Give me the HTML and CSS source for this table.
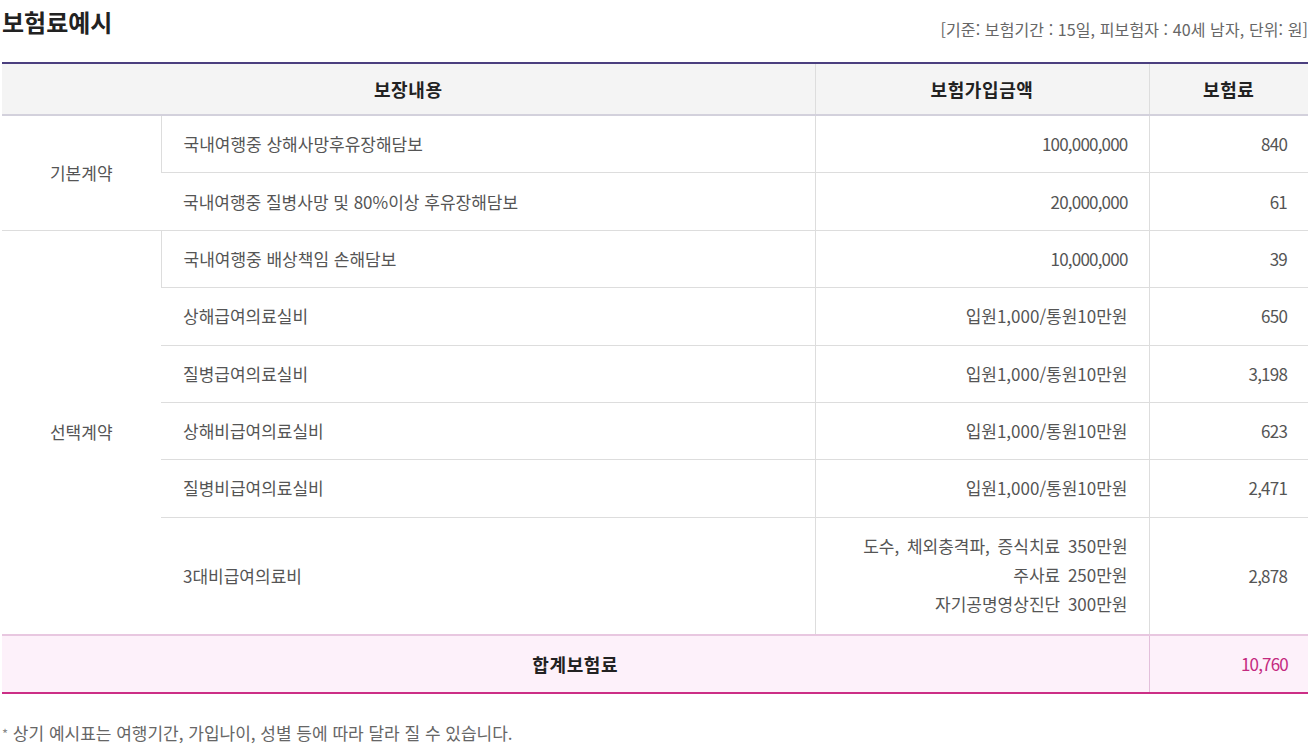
FILE: index.html
```html
<!DOCTYPE html>
<html lang="ko">
<head>
<meta charset="utf-8">
<title>보험료예시</title>
<link rel="stylesheet" href="styles.css">
</head>
<body>
<div class="page">
  <div class="head">
    <h2 class="title">보험료예시</h2>
    <p class="note">[기준: 보험기간 : 15일, 피보험자 : 40세 남자, 단위: 원]</p>
  </div>
  <table class="premium">
    <colgroup>
      <col class="c1"><col class="c2"><col class="c3"><col class="c4">
    </colgroup>
    <thead>
      <tr>
        <th colspan="2">보장내용</th>
        <th>보험가입금액</th>
        <th>보험료</th>
      </tr>
    </thead>
    <tbody>
      <tr>
        <td class="group" rowspan="2">기본계약</td>
        <td class="name">국내여행중 상해사망후유장해담보</td>
        <td class="num digits">100,000,000</td>
        <td class="num digits">840</td>
      </tr>
      <tr>
        <td class="name">국내여행중 질병사망 및 80%이상 후유장해담보</td>
        <td class="num digits">20,000,000</td>
        <td class="num digits">61</td>
      </tr>
      <tr>
        <td class="group" rowspan="6">선택계약</td>
        <td class="name">국내여행중 배상책임 손해담보</td>
        <td class="num digits">10,000,000</td>
        <td class="num digits">39</td>
      </tr>
      <tr>
        <td class="name">상해급여의료실비</td>
        <td class="num">입원1,000/통원10만원</td>
        <td class="num digits">650</td>
      </tr>
      <tr>
        <td class="name">질병급여의료실비</td>
        <td class="num">입원1,000/통원10만원</td>
        <td class="num digits">3,198</td>
      </tr>
      <tr>
        <td class="name">상해비급여의료실비</td>
        <td class="num">입원1,000/통원10만원</td>
        <td class="num digits">623</td>
      </tr>
      <tr>
        <td class="name">질병비급여의료실비</td>
        <td class="num">입원1,000/통원10만원</td>
        <td class="num digits">2,471</td>
      </tr>
      <tr>
        <td class="name">3대비급여의료비</td>
        <td class="num multi">도수, 체외충격파, 증식치료 350만원<br>주사료 250만원<br>자기공명영상진단 300만원</td>
        <td class="num digits">2,878</td>
      </tr>
    </tbody>
    <tfoot>
      <tr>
        <th colspan="3" class="sum-label">합계보험료</th>
        <td class="sum-value">10,760</td>
      </tr>
    </tfoot>
  </table>
  <p class="foot"><span class="star">*</span> 상기 예시표는 여행기간, 가입나이, 성별 등에 따라 달라 질 수 있습니다.</p>
</div>
</body>
</html>
```

FILE: styles.css
```css
html, body {
  margin: 0;
  padding: 0;
  background: #ffffff;
}

body {
  font-family: "Noto Sans CJK KR", "Noto Sans", sans-serif;
  color: #555555;
}

.page {
  width: 1306px;
  padding: 0 4px 0 2px;
}

.head {
  display: flex;
  justify-content: space-between;
  align-items: flex-start;
  height: 62px;
}

.title {
  margin: 0;
  padding-top: 7px;
  font-size: 24px;
  line-height: 30px;
  font-weight: 700;
  color: #222222;
}

.note {
  margin: 0;
  padding-top: 19px;
  font-size: 16px;
  line-height: 20px;
  color: #666666;
  letter-spacing: 0.1px;
}

.premium {
  width: 1306px;
  table-layout: fixed;
  border-collapse: collapse;
  font-size: 17px;
  line-height: 24px;
}

.c1 { width: 159px; }
.c2 { width: 654px; }
.c3 { width: 334px; }
.c4 { width: 159px; }

.premium thead th {
  height: 50px;
  padding: 0;
  background: #f4f4f4;
  border-top: 2px solid #4b3f7f;
  border-bottom: 2px solid #d3d1dc;
  border-left: 1px solid #dddddd;
  font-size: 18px;
  font-weight: 700;
  color: #222222;
  letter-spacing: 0.6px;
  text-align: center;
}

.premium thead th:first-child {
  border-left: none;
}

.premium tbody td {
  padding: 16.2px 20px;
  border-bottom: 1px solid #dddddd;
  border-left: 1px solid #dddddd;
  vertical-align: middle;
  color: #555555;
}

.premium tbody td:first-child {
  border-left: none;
}

.premium td.group {
  text-align: center;
  padding: 0;
}

.premium td.name {
  padding-left: 22px;
}

.premium td.num {
  text-align: right;
  padding-right: 21px;
}

.premium td.digits {
  letter-spacing: -0.8px;
}

.premium td.multi {
  line-height: 29px;
  padding-top: 13px;
  padding-bottom: 16px;
  word-spacing: 3px;
}

.premium tfoot th,
.premium tfoot td {
  height: 56px;
  padding: 0;
  background: #fdf1fa;
  border-top: 2px solid #e8c7e0;
  border-bottom: 2px solid #cc2e86;
}

.premium .sum-label {
  text-align: center;
  font-size: 18px;
  font-weight: 700;
  letter-spacing: 0.6px;
  color: #222222;
}

.premium .sum-value {
  text-align: right;
  padding-right: 20px;
  border-left: 1px solid #e3c0db;
  color: #c42a7f;
  letter-spacing: -0.8px;
}

.foot {
  margin: 28px 0 0;
  font-size: 17px;
  line-height: 22px;
  color: #666666;
}

.star {
  font-size: 13px;
  color: #888888;
  vertical-align: 1px;
}
```
